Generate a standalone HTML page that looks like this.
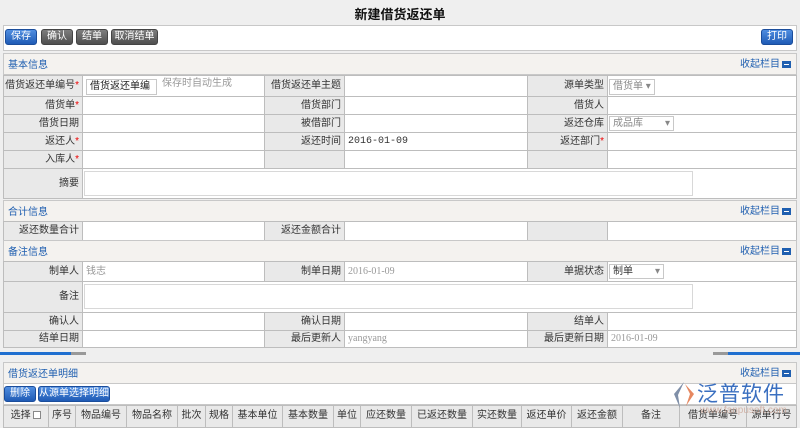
<!DOCTYPE html>
<html><head><meta charset="utf-8"><style>
*{margin:0;padding:0;box-sizing:border-box}
body{width:800px;height:428px;overflow:hidden;background:#efefef;font-family:"Liberation Sans","Noto Sans CJK SC",sans-serif;font-size:10px;color:#333;position:relative;line-height:1.2}
.a{position:absolute}
.title{left:0;width:800px;top:7px;text-align:center;font-weight:bold;font-size:13px;color:#111}
.box{background:#fff;border:1px solid #c8c8c8}
.btn{position:absolute;height:16px;line-height:14px;text-align:center;color:#fff;font-size:10px;border-radius:3px}
.blue{background:linear-gradient(#4f8de0,#1f5bb5);border:1px solid #1b4d9b}
.gray{background:linear-gradient(#7d7d7d,#4f4f4f);border:1px solid #444}
.hd{background:#f4f2ef;border:1px solid #c8c8c8}
.hd b{position:absolute;left:4px;top:5px;line-height:14px;font-weight:normal;color:#1f5fb0;font-size:10px}
.hd i{position:absolute;right:16px;top:4px;line-height:14px;font-style:normal;color:#1f5fb0;font-size:10px}
.hd s{position:absolute;right:5px;top:7px;width:9px;height:7px;background:#1f5fb0;text-decoration:none}
.hd s:after{content:"";position:absolute;left:2px;top:3px;width:5px;height:1px;background:#fff}
.l{position:absolute;background:#e9e9e9;border:1px solid #bdbdbd;text-align:right;padding-right:3px;color:#333}
.v{position:absolute;background:#fff;border:1px solid #bdbdbd;padding-left:3px;color:#333}
.r{color:#e00}
.sel{position:absolute;background:#fff;border:1px solid #c8c8c8;color:#888;padding-left:3px;height:16px;line-height:14px}
.ta{position:absolute;background:#fff;border:1px solid #d8d8d8}
.gh{position:absolute;top:405px;height:23px;line-height:20px;background:#e9e9e9;border:1px solid #bdbdbd;text-align:center}
</style></head><body>
<div class="a title">新建借货返还单</div>
<div class="a box" style="left:3px;top:25px;width:794px;height:26px"></div>
<div class="btn blue" style="left:5px;top:29px;width:32px">保存</div>
<div class="btn gray" style="left:41px;top:29px;width:32px">确认</div>
<div class="btn gray" style="left:76px;top:29px;width:32px">结单</div>
<div class="btn gray" style="left:111px;top:29px;width:47px">取消结单</div>
<div class="btn blue" style="left:761px;top:29px;width:32px">打印</div>

<div class="a hd" style="left:3px;top:53px;width:794px;height:22px"><b>基本信息</b><i>收起栏目</i><s></s></div>
<div class="l" style="left:3px;top:75px;width:80px;height:22px;line-height:20px">借货返还单编号<span class="r">*</span></div>
<div class="v" style="left:82px;top:75px;width:183px;height:22px"></div>
<div class="sel" style="left:86px;top:79px;width:71px;color:#222">借货返还单编 ▾</div>
<div class="a" style="left:162px;top:78px;color:#999">保存时自动生成</div>
<div class="l" style="left:264px;top:75px;width:81px;height:22px;line-height:20px">借货返还单主题</div>
<div class="v" style="left:344px;top:75px;width:184px;height:22px"></div>
<div class="l" style="left:527px;top:75px;width:81px;height:22px;line-height:20px">源单类型</div>
<div class="v" style="left:607px;top:75px;width:190px;height:22px"></div>
<div class="sel" style="left:609px;top:79px;width:46px">借货单 ▾</div>

<div class="l" style="left:3px;top:96px;width:80px;height:19px;line-height:17px">借货单<span class="r">*</span></div>
<div class="v" style="left:82px;top:96px;width:183px;height:19px"></div>
<div class="l" style="left:264px;top:96px;width:81px;height:19px;line-height:17px">借货部门</div>
<div class="v" style="left:344px;top:96px;width:184px;height:19px"></div>
<div class="l" style="left:527px;top:96px;width:81px;height:19px;line-height:17px">借货人</div>
<div class="v" style="left:607px;top:96px;width:190px;height:19px"></div>

<div class="l" style="left:3px;top:114px;width:80px;height:19px;line-height:17px">借货日期</div>
<div class="v" style="left:82px;top:114px;width:183px;height:19px"></div>
<div class="l" style="left:264px;top:114px;width:81px;height:19px;line-height:17px">被借部门</div>
<div class="v" style="left:344px;top:114px;width:184px;height:19px"></div>
<div class="l" style="left:527px;top:114px;width:81px;height:19px;line-height:17px">返还仓库</div>
<div class="v" style="left:607px;top:114px;width:190px;height:19px"></div>
<div class="sel" style="left:609px;top:116px;width:65px;height:15px;line-height:13px">成品库 <span style="float:right;padding-right:3px">▾</span></div>

<div class="l" style="left:3px;top:132px;width:80px;height:19px;line-height:17px">返还人<span class="r">*</span></div>
<div class="v" style="left:82px;top:132px;width:183px;height:19px"></div>
<div class="l" style="left:264px;top:132px;width:81px;height:19px;line-height:17px">返还时间</div>
<div class="v" style="left:344px;top:132px;width:184px;height:19px;line-height:17px;font-family:'Liberation Mono',monospace">2016-01-09</div>
<div class="l" style="left:527px;top:132px;width:81px;height:19px;line-height:17px">返还部门<span class="r">*</span></div>
<div class="v" style="left:607px;top:132px;width:190px;height:19px"></div>

<div class="l" style="left:3px;top:150px;width:80px;height:19px;line-height:17px">入库人<span class="r">*</span></div>
<div class="v" style="left:82px;top:150px;width:183px;height:19px"></div>
<div class="l" style="left:264px;top:150px;width:81px;height:19px"></div>
<div class="v" style="left:344px;top:150px;width:184px;height:19px"></div>
<div class="l" style="left:527px;top:150px;width:81px;height:19px"></div>
<div class="v" style="left:607px;top:150px;width:190px;height:19px"></div>

<div class="l" style="left:3px;top:168px;width:80px;height:31px;line-height:29px">摘要</div>
<div class="v" style="left:82px;top:168px;width:715px;height:31px"></div>
<div class="ta" style="left:84px;top:171px;width:609px;height:25px"></div>

<div class="a hd" style="left:3px;top:200px;width:794px;height:22px"><b>合计信息</b><i>收起栏目</i><s></s></div>
<div class="l" style="left:3px;top:221px;width:80px;height:20px;line-height:18px">返还数量合计</div>
<div class="v" style="left:82px;top:221px;width:183px;height:20px"></div>
<div class="l" style="left:264px;top:221px;width:81px;height:20px;line-height:18px">返还金额合计</div>
<div class="v" style="left:344px;top:221px;width:184px;height:20px"></div>
<div class="l" style="left:527px;top:221px;width:81px;height:20px"></div>
<div class="v" style="left:607px;top:221px;width:190px;height:20px"></div>

<div class="a hd" style="left:3px;top:240px;width:794px;height:22px"><b>备注信息</b><i>收起栏目</i><s></s></div>
<div class="l" style="left:3px;top:261px;width:80px;height:21px;line-height:19px">制单人</div>
<div class="v" style="left:82px;top:261px;width:183px;height:21px;line-height:19px;color:#999">钱志</div>
<div class="l" style="left:264px;top:261px;width:81px;height:21px;line-height:19px">制单日期</div>
<div class="v" style="left:344px;top:261px;width:184px;height:21px;line-height:19px;color:#999;font-family:'Liberation Serif',serif">2016-01-09</div>
<div class="l" style="left:527px;top:261px;width:81px;height:21px;line-height:19px">单据状态</div>
<div class="v" style="left:607px;top:261px;width:190px;height:21px"></div>
<div class="sel" style="left:609px;top:264px;width:55px;height:15px;line-height:13px;color:#333">制单 <span style="float:right;padding-right:3px;color:#888">▾</span></div>

<div class="l" style="left:3px;top:281px;width:80px;height:32px;line-height:30px">备注</div>
<div class="v" style="left:82px;top:281px;width:715px;height:32px"></div>
<div class="ta" style="left:84px;top:284px;width:609px;height:25px"></div>

<div class="l" style="left:3px;top:312px;width:80px;height:19px;line-height:17px">确认人</div>
<div class="v" style="left:82px;top:312px;width:183px;height:19px"></div>
<div class="l" style="left:264px;top:312px;width:81px;height:19px;line-height:17px">确认日期</div>
<div class="v" style="left:344px;top:312px;width:184px;height:19px"></div>
<div class="l" style="left:527px;top:312px;width:81px;height:19px;line-height:17px">结单人</div>
<div class="v" style="left:607px;top:312px;width:190px;height:19px"></div>

<div class="l" style="left:3px;top:330px;width:80px;height:18px;line-height:16px">结单日期</div>
<div class="v" style="left:82px;top:330px;width:183px;height:18px"></div>
<div class="l" style="left:264px;top:330px;width:81px;height:18px;line-height:16px">最后更新人</div>
<div class="v" style="left:344px;top:330px;width:184px;height:18px;line-height:16px;color:#999;font-family:'Liberation Serif',serif">yangyang</div>
<div class="l" style="left:527px;top:330px;width:81px;height:18px;line-height:16px">最后更新日期</div>
<div class="v" style="left:607px;top:330px;width:190px;height:18px;line-height:16px;color:#999;font-family:'Liberation Serif',serif">2016-01-09</div>

<div class="a" style="left:0;top:352px;width:71px;height:3px;background:#1f6fd0"></div>
<div class="a" style="left:71px;top:352px;width:15px;height:3px;background:#999"></div>
<div class="a" style="left:713px;top:352px;width:15px;height:3px;background:#999"></div>
<div class="a" style="left:728px;top:352px;width:72px;height:3px;background:#1f6fd0"></div>

<div class="a hd" style="left:3px;top:362px;width:794px;height:22px"><b>借货返还单明细</b><i>收起栏目</i><s></s></div>
<div class="a box" style="left:3px;top:383px;width:794px;height:22px"></div>
<div class="btn blue" style="left:4px;top:386px;width:32px">删除</div>
<div class="btn blue" style="left:38px;top:386px;width:72px">从源单选择明细</div>

<div class="gh" style="left:3px;width:46px">选择 <span style="display:inline-block;width:8px;height:8px;border:1px solid #888;background:#fff;vertical-align:-1px"></span></div>
<div class="gh" style="left:48px;width:28px">序号</div>
<div class="gh" style="left:75px;width:52px">物品编号</div>
<div class="gh" style="left:126px;width:52px">物品名称</div>
<div class="gh" style="left:177px;width:29px">批次</div>
<div class="gh" style="left:205px;width:28px">规格</div>
<div class="gh" style="left:232px;width:51px">基本单位</div>
<div class="gh" style="left:282px;width:52px">基本数量</div>
<div class="gh" style="left:333px;width:28px">单位</div>
<div class="gh" style="left:360px;width:52px">应还数量</div>
<div class="gh" style="left:411px;width:62px">已返还数量</div>
<div class="gh" style="left:472px;width:50px">实还数量</div>
<div class="gh" style="left:521px;width:51px">返还单价</div>
<div class="gh" style="left:571px;width:52px">返还金额</div>
<div class="gh" style="left:622px;width:58px">备注</div>
<div class="gh" style="left:679px;width:68px">借货单编号</div>
<div class="gh" style="left:746px;width:51px">源单行号</div>

<div class="a" style="left:670px;top:380px;width:26px;height:30px">
<svg width="26" height="30" viewBox="0 0 26 30"><path d="M14 2 L4 14 L10 28 L8 15 Z" fill="#7f8fa8"/><path d="M15 4 L24 14 L16 26 L20 14 Z" fill="#e06a3a" opacity=".8"/></svg></div>
<div class="a" style="left:697px;top:382px;font-size:21px;color:#3a6fc0;letter-spacing:1px">泛普软件</div>
<div class="a" style="left:700px;top:405px;font-size:10px;color:#c9a090;opacity:.7">www.fanpusoft.com</div>
</body></html>
